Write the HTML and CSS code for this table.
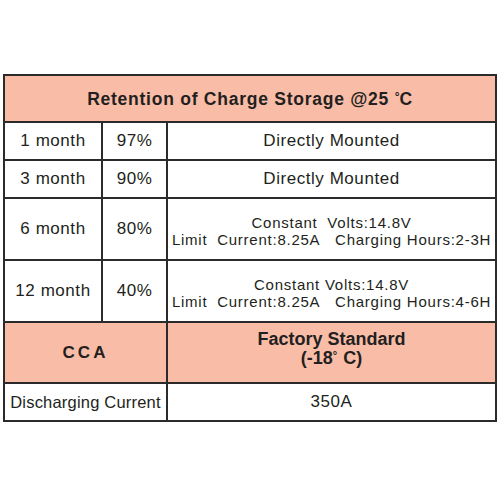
FILE: index.html
```html
<!DOCTYPE html>
<html>
<head>
<meta charset="utf-8">
<link rel="stylesheet" href="styles.css">
</head>
<body>
<div class="page">
<table class="spec">
  <colgroup>
    <col class="c1"><col class="c2"><col class="c3">
  </colgroup>
  <tr class="head">
    <th colspan="3" class="title">Retention of Charge Storage @25 <span class="deg">°</span>C</th>
  </tr>
  <tr class="short">
    <td>1 month</td><td>97%</td><td>Directly Mounted</td>
  </tr>
  <tr class="short">
    <td>3 month</td><td>90%</td><td>Directly Mounted</td>
  </tr>
  <tr class="tall">
    <td>6 month</td><td>80%</td>
    <td class="small"><div>Constant&nbsp; Volts:14.8V</div><div>Limit&nbsp; Current:8.25A&nbsp;&nbsp; Charging Hours:2-3H</div></td>
  </tr>
  <tr class="tall">
    <td>12 month</td><td>40%</td>
    <td class="small"><div>Constant Volts:14.8V</div><div>Limit&nbsp; Current:8.25A&nbsp;&nbsp; Charging Hours:4-6H</div></td>
  </tr>
  <tr class="head2">
    <th colspan="2" class="cca">CCA</th>
    <th class="factory"><div>Factory Standard</div><div class="sub">(-18<span class="deg2">°</span> C)</div></th>
  </tr>
  <tr class="short">
    <td colspan="2" class="dis">Discharging Current</td><td>350A</td>
  </tr>
</table>
</div>
</body>
</html>
```

FILE: styles.css
```css
html, body {
  margin: 0;
  padding: 0;
  background: #ffffff;
}
.page {
  padding: 74px 5px 0 3px;
}
.spec {
  border-collapse: collapse;
  width: 492px;
  table-layout: fixed;
  font-family: "Liberation Sans", Arial, sans-serif;
  color: #231f20;
}
.c1 { width: 98px; }
.c2 { width: 65px; }
.c3 { width: 329px; }
.spec td, .spec th {
  border: 2px solid #2b2b2b;
  text-align: center;
  vertical-align: middle;
  padding: 0;
  font-size: 17px;
  letter-spacing: 0.55px;
  font-weight: normal;
}
.head { height: 47px; }
.head th, .head2 th { background: #f9bca7; }
.title {
  font-weight: bold !important;
  font-size: 17.5px !important;
  letter-spacing: 0.75px !important;
  padding-top: 2px !important;
}
.deg { font-size: 12px; vertical-align: 4px; letter-spacing: 0; }
.short { height: 38px; }
.tall { height: 62px; }
.head2 { height: 61px; }
.small {
  font-size: 15px !important;
  line-height: 17px;
  letter-spacing: 0.75px !important;
  padding-top: 4px !important;
}
.cca {
  font-weight: bold !important;
  letter-spacing: 3px !important;
  font-size: 17px !important;
}
.factory {
  font-weight: bold !important;
  font-size: 18px !important;
  letter-spacing: 0 !important;
  line-height: 16px;
  padding-bottom: 8px !important;
}
.factory .sub { font-size: 18px; }
.deg2 { font-size: 11px; vertical-align: 5px; margin-right: 1px; }
.dis {
  font-size: 16.5px !important;
  letter-spacing: 0.2px !important;
  white-space: nowrap;
}
```
